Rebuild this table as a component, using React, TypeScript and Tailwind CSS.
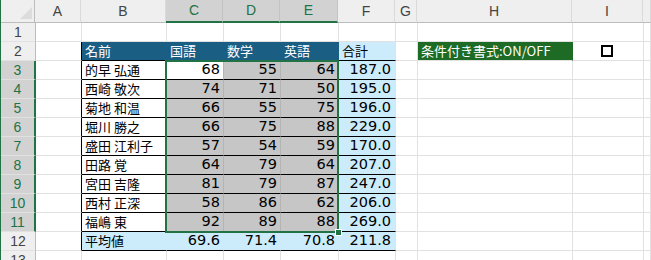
import React from 'react';

const COLS = [
  { key: 'A', w: 'w-[46px]' },
  { key: 'B', w: 'w-[85px]' },
  { key: 'C', w: 'w-[57px]' },
  { key: 'D', w: 'w-[57px]' },
  { key: 'E', w: 'w-[58px]' },
  { key: 'F', w: 'w-[57px]' },
  { key: 'G', w: 'w-[22px]' },
  { key: 'H', w: 'w-[155px]' },
  { key: 'I', w: 'w-[71px]' },
  { key: 'J', w: 'flex-1' },
];

const students = [
  ['的早 弘通', 68, 55, 64, '187.0'],
  ['西崎 敬次', 74, 71, 50, '195.0'],
  ['菊地 和温', 66, 55, 75, '196.0'],
  ['堀川 勝之', 66, 75, 88, '229.0'],
  ['盛田 江利子', 57, 54, 59, '170.0'],
  ['田路 覚', 64, 79, 64, '207.0'],
  ['宮田 吉隆', 81, 79, 87, '247.0'],
  ['西村 正深', 58, 86, 62, '206.0'],
  ['福嶋 東', 92, 89, 88, '269.0'],
];

const jp = "font-['Noto_Sans_CJK_JP',sans-serif] text-[13px]";
const num = "font-['DejaVu_Sans','Noto_Sans_CJK_JP',sans-serif] text-[14.5px]";

// a plain empty worksheet cell
function Cell({ w, className = '', children }: { w: string; className?: string; children?: React.ReactNode }) {
  return (
    <div className={`${w} h-full shrink-0 border-r border-b border-[#e1e1e1] flex items-center overflow-hidden whitespace-nowrap ${className}`}>
      {children}
    </div>
  );
}

function RowHead({ n, selected }: { n: number; selected?: boolean }) {
  return (
    <div
      className={`w-[35px] h-full shrink-0 flex items-center justify-center border-b border-[#e1e1e1] font-['Liberation_Sans',sans-serif] text-[14px] ${
        selected
          ? 'bg-[#d2d2d2] text-[#217346] border-r-2 border-r-[#217346]'
          : 'bg-[#efefef] text-[#444] border-r border-r-[#bcbcbc]'
      }`}
    >
      {n}
    </div>
  );
}

function Row({ children }: { children: React.ReactNode }) {
  return <div className="flex h-[19px]">{children}</div>;
}

export default function App() {
  return (
    <div className="relative w-[651px] h-[260px] overflow-hidden bg-white border-l border-[#217346] text-black">
      {/* column headers */}
      <div className="flex h-[23px]">
        <div className="w-[34px] h-full shrink-0 bg-[#efefef] border-r border-b border-[#bcbcbc] relative">
          <div className="absolute right-[2px] bottom-[3px] w-0 h-0 border-l-[12px] border-l-transparent border-b-[12px] border-b-[#dcdcdc]" />
        </div>
        {COLS.map((c) => {
          const sel = c.key === 'C' || c.key === 'D' || c.key === 'E';
          return (
            <div
              key={c.key}
              className={`${c.w} h-full shrink-0 flex items-center justify-center font-['Liberation_Sans',sans-serif] text-[14px] ${
                sel
                  ? 'bg-[#d2d2d2] text-[#217346] border-r border-r-[#c4c4c4] border-b-2 border-b-[#217346]'
                  : 'bg-[#efefef] text-[#444] border-r border-r-[#dadada] border-b border-b-[#bcbcbc]'
              }`}
            >
              {c.key !== 'J' && c.key}
            </div>
          );
        })}
      </div>

      {/* row 1 */}
      <Row>
        <RowHead n={1} />
        {COLS.map((c) => (
          <Cell key={c.key} w={c.w} />
        ))}
      </Row>

      {/* row 2: table header + toggle */}
      <Row>
        <RowHead n={2} />
        <Cell w="w-[46px]" className="border-r-black" />
        <Cell w="w-[85px]" className={`bg-[#1b5e84] border-r-[#1b5e84] border-b-black text-white pl-[3px] ${jp}`}>名前</Cell>
        <Cell w="w-[57px]" className={`bg-[#1b5e84] border-r-[#1b5e84] border-b-black text-white pl-[3px] ${jp}`}>国語</Cell>
        <Cell w="w-[57px]" className={`bg-[#1b5e84] border-r-[#1b5e84] border-b-black text-white pl-[3px] ${jp}`}>数学</Cell>
        <Cell w="w-[58px]" className={`bg-[#1b5e84] border-r-[#1b5e84] border-b-black text-white pl-[3px] ${jp}`}>英語</Cell>
        <Cell w="w-[57px]" className={`bg-[#ccecfc] border-b-black pl-[3px] ${jp}`}>合計</Cell>
        <Cell w="w-[22px]" />
        <Cell w="w-[155px]" className={`bg-[#1d6b24] border-r-[#1d6b24] text-white pl-[3px] ${jp}`}>条件付き書式:ON/OFF</Cell>
        <Cell w="w-[71px]" className="pl-[28px]">
          <div className="w-[12px] h-[12px] border-2 border-black bg-white" />
        </Cell>
        <Cell w="flex-1" />
      </Row>

      {/* student rows */}
      {students.map((s, i) => (
        <Row key={i}>
          <RowHead n={i + 3} selected />
          <Cell w="w-[46px]" className="border-r-black" />
          <Cell w="w-[85px]" className={`border-b-black pl-[3px] ${jp}`}>{s[0]}</Cell>
          {[s[1], s[2], s[3]].map((v, j) => (
            <Cell
              key={j}
              w={j === 2 ? 'w-[58px]' : 'w-[57px]'}
              className={`border-b-black border-r-[#b4b4b4] justify-end pr-[3px] ${num} ${i === 0 && j === 0 ? 'bg-white' : 'bg-[#c6c6c6]'}`}
            >
              {v}
            </Cell>
          ))}
          <Cell w="w-[57px]" className={`bg-[#ccecfc] border-b-black justify-end pr-[4px] ${num}`}>{s[4]}</Cell>
          <Cell w="w-[22px]" />
          <Cell w="w-[155px]" />
          <Cell w="w-[71px]" />
          <Cell w="flex-1" />
        </Row>
      ))}

      {/* row 12: averages */}
      <Row>
        <RowHead n={12} />
        <Cell w="w-[46px]" className="border-r-black" />
        <Cell w="w-[85px]" className={`bg-[#ccecfc] border-r-[#ccecfc] border-b-black pl-[3px] ${jp}`}>平均値</Cell>
        <Cell w="w-[57px]" className={`bg-[#ccecfc] border-r-[#ccecfc] border-b-black justify-end pr-[3px] ${num}`}>69.6</Cell>
        <Cell w="w-[57px]" className={`bg-[#ccecfc] border-r-[#ccecfc] border-b-black justify-end pr-[3px] ${num}`}>71.4</Cell>
        <Cell w="w-[58px]" className={`bg-[#ccecfc] border-r-[#ccecfc] border-b-black justify-end pr-[3px] ${num}`}>70.8</Cell>
        <Cell w="w-[57px]" className={`bg-[#ccecfc] border-b-black justify-end pr-[4px] ${num}`}>211.8</Cell>
        <Cell w="w-[22px]" />
        <Cell w="w-[155px]" />
        <Cell w="w-[71px]" />
        <Cell w="flex-1" />
      </Row>

      {/* row 13 */}
      <Row>
        <RowHead n={13} />
        {COLS.map((c) => (
          <Cell key={c.key} w={c.w} />
        ))}
      </Row>

      {/* selection C3:E11 */}
      <div className="absolute left-[164px] top-[60px] w-[174px] h-[173px] border-2 border-[#217346] pointer-events-none" />
      <div className="absolute left-[334px] top-[229px] w-[7px] h-[7px] bg-[#217346] border border-white pointer-events-none" />
    </div>
  );
}
